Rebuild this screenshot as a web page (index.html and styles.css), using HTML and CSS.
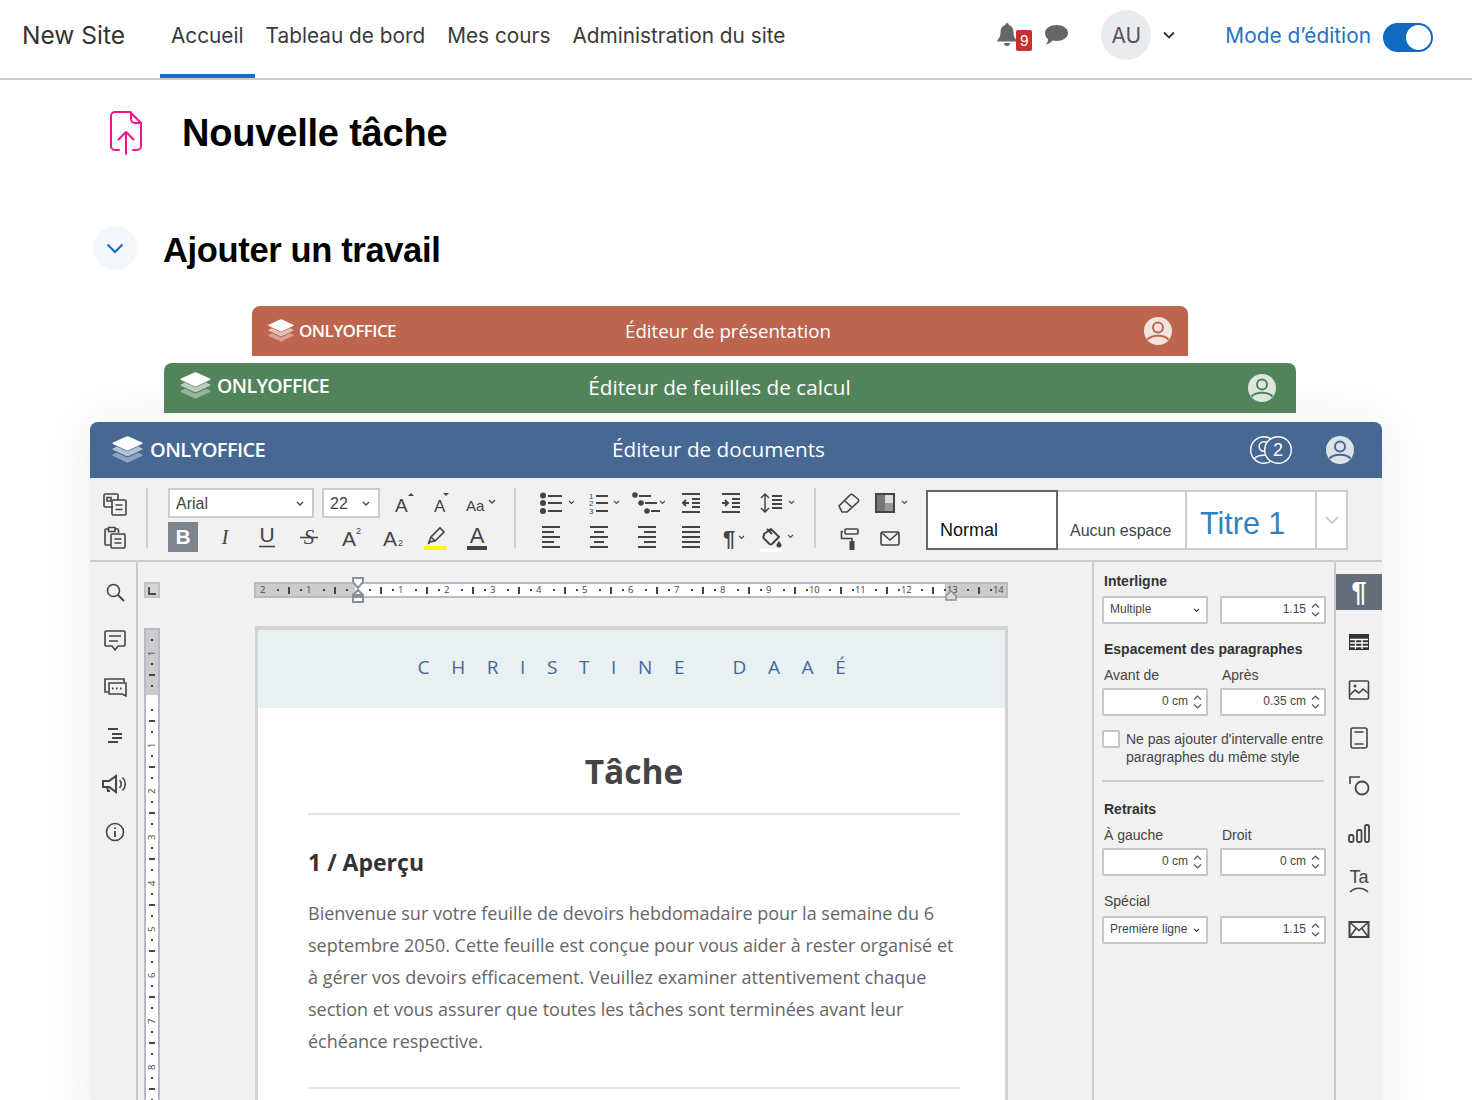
FILE: index.html
```html
<!DOCTYPE html>
<html lang="fr">
<head>
<meta charset="utf-8">
<title>Nouvelle tâche</title>
<link rel="stylesheet" href="styles.css">
</head>
<body>
<svg class="defs" width="0" height="0">
  <symbol id="logo" viewBox="0 0 31 28">
    <path fill="#fff" d="M14.4.4a2.6 2.6 0 0 1 2.2 0L30 6.6c.8.4.8 1 0 1.400L16.600 14.200a2.600 2.600 0 0 1-2.200 0L1 8c-.8-.4-.8-1 0-1.400z"/>
    <path fill="#fff" opacity=".6" d="M1 12.400l3.800-1.800 9.600 4.500a2.600 2.600 0 0 0 2.200 0l9.600-4.500 3.800 1.800c.8.4.8 1 0 1.400l-13.400 6.200a2.600 2.600 0 0 1-2.200 0L1 13.800c-.8-.4-.8-1 0-1.400z"/>
    <path fill="#fff" opacity=".4" d="M1 18.600l3.800-1.800 9.600 4.500a2.600 2.600 0 0 0 2.200 0l9.600-4.500 3.800 1.800c.8.400.8 1 0 1.400l-13.400 6.200a2.600 2.600 0 0 1-2.200 0L1 20c-.8-.4-.8-1 0-1.400z"/>
  </symbol>
  <symbol id="avatar" viewBox="0 0 28 28">
    <circle cx="14" cy="14" r="14" fill="var(--av-bg)"/>
    <circle cx="14" cy="10.500" r="5" fill="none" stroke="var(--av-fg)" stroke-width="2"/>
    <path d="M3.500 22.500C8 17.500 20 17.500 24.500 22.500" fill="none" stroke="var(--av-fg)" stroke-width="2"/>
  </symbol>
  <symbol id="chev" viewBox="0 0 8 6"><path d="M1 1l3 3 3-3" fill="none" stroke="#444" stroke-width="1.400"/></symbol>
  <symbol id="spin" viewBox="0 0 9 16"><path d="M1 5.500l3.500-3.500 3.500 3.500M1 10.500l3.500 3.500 3.500-3.500" fill="none" stroke="#555" stroke-width="1.200"/></symbol>
</svg>

<header class="topbar">
  <div class="brand">New Site</div>
  <nav class="nav">
    <a class="nav-link is-active">Accueil</a>
    <a class="nav-link">Tableau de bord</a>
    <a class="nav-link">Mes cours</a>
    <a class="nav-link">Administration du site</a>
  </nav>
  <div class="bell">
    <svg width="20" height="23" viewBox="0 0 20 23"><path fill="#666" d="M10 0a1.800 1.800 0 0 1 1.800 1.900C15 2.800 16.500 5.500 16.500 9c0 4 1 6 3 8v1.500H.5V17c2-2 3-4 3-8 0-3.500 1.500-6.200 4.700-7.100A1.800 1.800 0 0 1 10 0zM7 20h6a3 3 0 0 1-6 0z"/></svg>
    <span class="badge">9</span>
  </div>
  <svg class="chat" width="23" height="20" viewBox="0 0 23 20"><path fill="#666" d="M11.500 0C17.800 0 23 3.500 23 8s-5.200 8-11.500 8c-1.400 0-2.800-.2-4-.5C6 17 4 19 1 19.500c1.300-1.500 2-3.300 2.100-5.300C1.200 12.800 0 10.500 0 8c0-4.500 5.200-8 11.500-8z"/></svg>
  <div class="user">AU</div>
  <svg class="user-chev" width="12" height="8" viewBox="0 0 12 8"><path d="M1 1.500l5 5 5-5" fill="none" stroke="#333" stroke-width="1.800"/></svg>
  <span class="edit-label">Mode d’édition</span>
  <span class="toggle"><span class="knob"></span></span>
</header>

<main>
  <div class="title-row">
    <svg width="34" height="44" viewBox="0 0 34 44" fill="none" stroke="#f0148c" stroke-width="2" stroke-linecap="round" stroke-linejoin="round"><path d="M10 39H6a4 4 0 0 1-4-4V5a4 4 0 0 1 4-4h15l11 11v23a4 4 0 0 1-4 4h-4"/><path d="M22 1.500V8a4 4 0 0 0 4 4h6"/><path d="M17 43V21M9.500 28.500L17 21l7.500 7.500"/></svg>
    <h1>Nouvelle tâche</h1>
  </div>
  <div class="section-row">
    <span class="collapse"><svg width="18" height="11" viewBox="0 0 18 11"><path d="M1.500 1.500L9 9l7.500-7.500" fill="none" stroke="#1a6fc0" stroke-width="2.200"/></svg></span>
    <h2>Ajouter un travail</h2>
  </div>

  <section class="stack">
    <div class="bar bar-red">
      <svg class="logo" width="26" height="24"><use href="#logo"/></svg>
      <span class="wordmark">ONLYOFFICE</span>
      <span class="bar-title">Éditeur de présentation</span>
      <svg class="avatar" width="28" height="28"><use href="#avatar"/></svg>
    </div>
    <div class="bar bar-green">
      <svg class="logo" width="31" height="28"><use href="#logo"/></svg>
      <span class="wordmark">ONLYOFFICE</span>
      <span class="bar-title">Éditeur de feuilles de calcul</span>
      <svg class="avatar" width="28" height="28"><use href="#avatar"/></svg>
    </div>

    <div class="editor">
      <div class="bar bar-blue">
        <svg class="logo" width="31" height="28"><use href="#logo"/></svg>
        <span class="wordmark">ONLYOFFICE</span>
        <span class="bar-title">Éditeur de documents</span>
        <span class="coauth">
          <svg width="44" height="28" viewBox="0 0 44 28" fill="none" stroke="#fff" stroke-width="1.400"><circle cx="14" cy="14" r="13.300"/><circle cx="14" cy="10.500" r="4.800"/><path d="M4 23c4-5 16-5 20 0"/><circle cx="28" cy="14" r="13.300" fill="#476893"/><text x="28" y="20" class="coauth-n">2</text></svg>
        </span>
        <svg class="avatar" width="28" height="28"><use href="#avatar"/></svg>
      </div>

      <div class="toolbar">
        <div class="tgroup g-clip">
          <svg class="ti" width="30" height="30" viewBox="0 0 30 30"><path d="M13 19H5a1 1 0 0 1-1-1V7a1 1 0 0 1 1-1h12a1 1 0 0 1 1 1v5"/><path d="M7 9.500h4v3.500H7z"/><rect x="12" y="12" width="14" height="15" rx="1"/><path d="M15.500 17h7M15.500 21.500h7"/></svg>
          <svg class="ti" width="30" height="30" viewBox="0 0 30 30"><path d="M10 23H6a1 1 0 0 1-1-1V8a1 1 0 0 1 1-1h2.500M15 7h2.500a1 1 0 0 1 1 1v3"/><path d="M8.500 5.500h6.500v4H8.500z"/><rect x="11" y="12" width="14" height="14" rx="1"/><path d="M14.500 17h7M14.500 21h7"/></svg>
        </div>
        <span class="tsep s1"></span>
        <div class="tgroup g-font">
          <div class="trow">
            <span class="field f-name">Arial<svg width="8" height="6"><use href="#chev"/></svg></span>
            <span class="field f-size">22<svg width="8" height="6"><use href="#chev"/></svg></span>
            <svg class="ti tt" width="30" height="30" viewBox="0 0 30 30"><text x="7" y="24" class="glyph g19">A</text><path d="M20 8h6l-3-3z" fill="#444" stroke="none"/></svg>
            <svg class="ti tt" width="30" height="30" viewBox="0 0 30 30"><text x="8" y="24" class="glyph g17">A</text><path d="M17 5h6l-3 3z" fill="#444" stroke="none"/></svg>
            <svg class="ti tt" width="34" height="30" viewBox="0 0 34 30"><text x="2" y="23" class="glyph g15">Aa</text><use href="#chev" x="24" y="11" width="8" height="6"/></svg>
          </div>
          <div class="trow row-fmt">
            <span class="bold-btn">B</span>
            <svg class="ti" width="30" height="30" viewBox="0 0 30 30"><text x="15" y="22" class="glyph g20 ital">I</text></svg>
            <svg class="ti" width="30" height="30" viewBox="0 0 30 30"><text x="15" y="20" class="glyph g20 mid">U</text><path d="M7 24.500h16"/></svg>
            <svg class="ti" width="30" height="30" viewBox="0 0 30 30"><text x="15" y="22" class="glyph g20 mid ital">S</text><path d="M6 15.500h18"/></svg>
            <svg class="ti" width="30" height="30" viewBox="0 0 30 30"><text x="6" y="24" class="glyph g20">A</text><text x="20" y="12" class="glyph g9">2</text></svg>
            <svg class="ti" width="30" height="30" viewBox="0 0 30 30"><text x="5" y="24" class="glyph g20">A</text><text x="20" y="24" class="glyph g9">2</text></svg>
            <svg class="ti" width="30" height="30" viewBox="0 0 30 30"><path d="M9 20l2-5 9-9 4 4-9 9zM11 15l4 4M8 22l2-2"/><rect x="4" y="24" width="22" height="4" fill="#f8f800" stroke="none"/></svg>
            <svg class="ti" width="30" height="30" viewBox="0 0 30 30"><text x="15" y="21" class="glyph g21 mid">A</text><rect x="5" y="24" width="20" height="4" fill="#444" stroke="none"/></svg>
          </div>
        </div>
        <span class="tsep s2"></span>
        <div class="tgroup g-para">
          <svg class="ti" width="48" height="30" viewBox="0 0 48 30"><g fill="#444" stroke="none"><circle cx="15" cy="7.500" r="3"/><circle cx="15" cy="15" r="3"/><circle cx="15" cy="23" r="3"/></g><path d="M20 8h14M20 15h14M20 23h14"/><use href="#chev" x="40" y="12" width="7" height="5"/></svg>
          <svg class="ti" width="48" height="30" viewBox="0 0 48 30"><text x="13" y="11" class="glyph g8">1</text><text x="13" y="18" class="glyph g8">2</text><text x="13" y="26" class="glyph g8">3</text><path d="M20 8h12M20 15h12M20 23h12"/><use href="#chev" x="37" y="12" width="7" height="5"/></svg>
          <svg class="ti" width="48" height="30" viewBox="0 0 48 30"><g fill="#444" stroke="none"><circle cx="11" cy="7" r="2.800"/><circle cx="17" cy="15" r="2.800"/><circle cx="23" cy="23" r="2.800"/></g><path d="M15 8h12M21 15h12M27 23h9"/><use href="#chev" x="35" y="12" width="7" height="5"/></svg>
          <svg class="ti" width="40" height="30" viewBox="0 0 40 30"><path d="M10 6h18M20 11h8M20 15h8M20 19h8M10 24h18"/><path d="M17 15h-6M14 12l-3 3 3 3"/></svg>
          <svg class="ti" width="40" height="30" viewBox="0 0 40 30"><path d="M10 6h18M20 11h8M20 15h8M20 19h8M10 24h18"/><path d="M10 15h6M13 12l3 3-3 3"/></svg>
          <svg class="ti" width="50" height="30" viewBox="0 0 50 30"><path d="M13 6v18M9 10l4-4 4 4M9 20l4 4 4-4" stroke-width="1.500"/><path d="M20 8h10M20 12h10M20 16h10M20 20h10"/><use href="#chev" x="36" y="12" width="7" height="5"/></svg>
          <svg class="ti" width="48" height="30" viewBox="0 0 48 30"><path d="M14 5h18M14 10h12M14 15h18M14 20h12M14 25h18"/></svg>
          <svg class="ti" width="48" height="30" viewBox="0 0 48 30"><path d="M14 5h18M18 10h10M14 15h18M18 20h10M14 25h18"/></svg>
          <svg class="ti" width="48" height="30" viewBox="0 0 48 30"><path d="M14 5h18M20 10h12M14 15h18M20 20h12M14 25h18"/></svg>
          <svg class="ti" width="40" height="30" viewBox="0 0 40 30"><path d="M10 5h18M10 10h18M10 15h18M10 20h18M10 25h18"/></svg>
          <svg class="ti" width="40" height="30" viewBox="0 0 40 30"><text x="11" y="24" class="glyph g22 bld">¶</text><use href="#chev" x="26" y="13" width="7" height="5"/></svg>
          <svg class="ti" width="50" height="30" viewBox="0 0 50 30"><g transform="translate(-4 0)"><path d="M16 12l7-5 8 8-7 7a2 2 0 0 1-2.500 0l-5.500-5.500a2 2 0 0 1 0-3zM19 7l5 5"/><path d="M31 19c1.500 2 2.500 3 2.500 4a2.500 2.500 0 0 1-5 0c0-1 1-2 2.500-4z" fill="#444" stroke="none"/></g><rect x="8" y="27" width="22" height="3" fill="#fff" stroke="none"/><use href="#chev" x="35" y="12" width="7" height="5"/></svg>
        </div>
        <span class="tsep s3"></span>
        <div class="tgroup g-misc">
          <svg class="ti" width="36" height="30" viewBox="0 0 36 30"><path d="M9 18L20 7a2 2 0 0 1 3 0l5 4a2 2 0 0 1 0 3L17 24h-5zM14.500 12.500l7.500 7"/></svg>
          <svg class="ti" width="46" height="30" viewBox="0 0 46 30"><rect x="10" y="6" width="18" height="18" fill="#fff" stroke="#444" stroke-width="2"/><rect x="11" y="7" width="8" height="16" fill="#777" stroke="none"/><rect x="19" y="15" width="8" height="8" fill="#999" stroke="none"/><rect x="19" y="7" width="8" height="8" fill="#ddd" stroke="none"/><use href="#chev" x="35" y="12" width="7" height="5"/></svg>
          <svg class="ti" width="36" height="30" viewBox="0 0 36 30"><g transform="translate(3 0)"><path d="M13 7h11a1 1 0 0 1 1 1v3a1 1 0 0 1-1 1H13a1 1 0 0 1-1-1V8a1 1 0 0 1 1-1zM10 9.500H8.500v7H19v3"/><rect x="16.500" y="19" width="5" height="9" fill="#444" stroke="none"/></g></svg>
          <svg class="ti" width="46" height="30" viewBox="0 0 46 30"><rect x="15" y="10" width="18" height="13" rx="1.500"/><path d="M16 11l8 7 8-7"/></svg>
        </div>
        <div class="styles">
          <span class="style style-normal">Normal</span>
          <span class="style style-nospace">Aucun espace</span>
          <span class="style style-h1">Titre 1</span>
          <span class="style style-more"><svg width="14" height="8" viewBox="0 0 14 8"><path d="M1 1l6 6 6-6" fill="none" stroke="#bbb" stroke-width="1.500"/></svg></span>
        </div>
      </div>

      <div class="editor-body">
        <aside class="rail">
          <svg class="ti" width="28" height="28" viewBox="0 0 28 28"><circle cx="12.500" cy="12.500" r="6"/><path d="M17 17l6 6" stroke-width="2"/></svg>
          <svg class="ti" width="28" height="28" viewBox="0 0 28 28"><path d="M5 5h18a1 1 0 0 1 1 1v13a1 1 0 0 1-1 1h-6l-3 4-3-4H5a1 1 0 0 1-1-1V6a1 1 0 0 1 1-1zM8 10h12M8 15h9"/></svg>
          <svg class="ti" width="28" height="28" viewBox="0 0 28 28"><path d="M7 18H4V5h19v3"/><path d="M8 9h17v13l-4-2H8z"/><path d="M11 14.500h1.500M15 14.500h1.500M19 14.500h1.500" stroke-width="2"/></svg>
          <svg class="ti" width="28" height="28" viewBox="0 0 28 28"><path d="M7 7h10M11 12h10M11 16h10M7 20h10" stroke-width="1.800"/></svg>
          <svg class="ti" width="28" height="28" viewBox="0 0 28 28"><path d="M2 11h6l7-5v16l-7-5H2zM6 17l1 4h2" stroke-width="2"/><path d="M18.500 10a5.500 5.500 0 0 1 0 8M21.500 7.500a9 9 0 0 1 0 13"/></svg>
          <svg class="ti" width="28" height="28" viewBox="0 0 28 28"><circle cx="14" cy="14" r="8.500"/><path d="M14 13v6" stroke-width="1.800"/><path d="M14 9.500v1.600" stroke-width="1.800"/></svg>
        </aside>

        <div class="workspace">
          <span class="corner"><svg width="8" height="8" viewBox="0 0 8 8"><path d="M1 0v7h7" fill="none" stroke="#444" stroke-width="1.800"/></svg></span>
          <div class="hruler-wrap">
            <div class="hruler">
              <span class="hc">2</span><span class="hc">1</span><span class="hc"></span><span class="hc">1</span><span class="hc">2</span><span class="hc">3</span><span class="hc">4</span><span class="hc">5</span><span class="hc">6</span><span class="hc">7</span><span class="hc">8</span><span class="hc">9</span><span class="hc hc2">10</span><span class="hc hc2">11</span><span class="hc hc2">12</span><span class="hc hc2">13</span><span class="hc hc2">14</span>
            </div>
            <svg class="marker-l" width="12" height="26" viewBox="0 0 12 26"><path d="M1 1h10v4l-5 6-5-6zM1 18l5-5 5 5zM1 20h10v5H1z" fill="#fff" stroke="#8a9098" stroke-width="2"/></svg>
            <svg class="marker-r" width="12" height="11" viewBox="0 0 12 11"><path d="M6 1l5 5v4H1V6z" fill="#ddd" stroke="#8a9098" stroke-width="1.500"/></svg>
          </div>
          <div class="vruler">
            <div class="vcells">
              <span class="vc"><i></i></span><span class="vc"><i>1</i></span><span class="vc"><i></i></span><span class="vc"><i>1</i></span><span class="vc"><i>2</i></span><span class="vc"><i>3</i></span><span class="vc"><i>4</i></span><span class="vc"><i>5</i></span><span class="vc"><i>6</i></span><span class="vc"><i>7</i></span><span class="vc"><i>8</i></span>
            </div>
          </div>
          <article class="page">
            <div class="page-banner">CHRISTINE DAAÉ</div>
            <div class="page-content">
              <h3 class="doc-title">Tâche</h3>
              <hr class="doc-rule">
              <h4 class="doc-head">1 / Aperçu</h4>
              <p class="doc-text">Bienvenue sur votre feuille de devoirs hebdomadaire pour la semaine du 6 septembre 2050. Cette feuille est conçue pour vous aider à rester organisé et à gérer vos devoirs efficacement. Veuillez examiner attentivement chaque section et vous assurer que toutes les tâches sont terminées avant leur échéance respective.</p>
              <hr class="doc-rule doc-rule-b">
            </div>
          </article>
        </div>

        <aside class="panel">
          <div class="p-head">Interligne</div>
          <div class="p-grid mt7">
            <span class="pf pf-sel">Multiple<svg width="7" height="5"><use href="#chev"/></svg></span>
            <span class="pf pf-num">1.15<svg width="9" height="16"><use href="#spin"/></svg></span>
          </div>
          <div class="p-head mt17">Espacement des paragraphes</div>
          <div class="p-grid mt10 p-labels"><span>Avant de</span><span>Après</span></div>
          <div class="p-grid mt5">
            <span class="pf pf-num">0 cm<svg width="9" height="16"><use href="#spin"/></svg></span>
            <span class="pf pf-num">0.35 cm<svg width="9" height="16"><use href="#spin"/></svg></span>
          </div>
          <label class="p-check"><span class="box"></span><span>Ne pas ajouter d'intervalle entre paragraphes du même style</span></label>
          <hr class="p-rule">
          <div class="p-head mt19">Retraits</div>
          <div class="p-grid mt10 p-labels"><span>À gauche</span><span>Droit</span></div>
          <div class="p-grid mt5">
            <span class="pf pf-num">0 cm<svg width="9" height="16"><use href="#spin"/></svg></span>
            <span class="pf pf-num">0 cm<svg width="9" height="16"><use href="#spin"/></svg></span>
          </div>
          <div class="p-grid mt17 p-labels"><span>Spécial</span></div>
          <div class="p-grid mt7">
            <span class="pf pf-sel">Première ligne<svg width="7" height="5"><use href="#chev"/></svg></span>
            <span class="pf pf-num">1.15<svg width="9" height="16"><use href="#spin"/></svg></span>
          </div>
        </aside>

        <aside class="tabs">
          <span class="tab is-active">¶</span>
          <span class="tab"><svg width="24" height="20" viewBox="0 0 24 20"><rect x="2" y="2" width="20" height="16" fill="#333"/><path d="M3 7.500h18M3 11h18M3 14.500h18M8.500 7v10M15 7v10" stroke="#fff" stroke-width="1.300"/></svg></span>
          <span class="tab"><svg class="ti" width="24" height="24" viewBox="0 0 24 24"><rect x="2.500" y="3" width="19" height="18" rx="1"/><path d="M3 17l5-5 4 3 4-4 5 4"/><circle cx="8" cy="8" r="1.500" fill="#444" stroke="none"/></svg></span>
          <span class="tab"><svg class="ti" width="24" height="24" viewBox="0 0 24 24"><rect x="4" y="2" width="16" height="20" rx="2"/><path d="M7.500 6h9M7.500 18h9"/></svg></span>
          <span class="tab"><svg class="ti" width="24" height="24" viewBox="0 0 24 24"><path d="M3 10V3h10"/><circle cx="15" cy="14" r="6.500" stroke-width="1.800"/></svg></span>
          <span class="tab"><svg class="ti" width="24" height="24" viewBox="0 0 24 24"><rect x="2" y="13" width="4.500" height="7" rx="1.500" stroke-width="1.800"/><rect x="10" y="8" width="4.500" height="12" rx="1.500" stroke-width="1.800"/><rect x="18" y="3" width="4" height="17" rx="1.500" stroke-width="1.800"/></svg></span>
          <span class="tab"><svg class="ti tab-ta" width="24" height="28" viewBox="0 0 24 28"><text x="12" y="15" class="glyph g18 mid">Ta</text><path d="M3 24c5-5 13-5 18 0"/></svg></span>
          <span class="tab"><svg class="ti" width="24" height="22" viewBox="0 0 24 22"><rect x="2.500" y="3" width="19" height="15" fill="none" stroke-width="2"/><path d="M3 3.500l9 8 9-8M3 17.500l6-8M21 17.500l-6-8" stroke-width="1.600"/></svg></span>
        </aside>
      </div>
    </div>
  </section>
</main>
</body>
</html>
```

FILE: styles.css
```css
* { box-sizing: border-box; }
html, body { margin: 0; height: 1100px; overflow: hidden; background: #fff; }
body { font-family: "Inter", "Liberation Sans", sans-serif; color: #333; }
.defs { position: absolute; }

.topbar { display: flex; align-items: center; height: 80px; border-bottom: 2px solid #ccc; padding-left: 22px; }
.brand { font-size: 24.500px; color: #333; margin-right: 35px; margin-top: -8px; }
.nav { display: flex; align-self: stretch; }
.nav-link { display: flex; align-items: center; padding: 0 11px 8px; font-size: 20.800px; color: #3a3a3a; }
.nav-link.is-active { box-shadow: inset 0 -4px 0 #1a6fc0; }
.bell { position: relative; margin-left: auto; width: 35px; height: 28px; margin-top: -8px; padding-top: 2px; }
.badge { position: absolute; left: 19px; top: 9px; width: 16px; height: 21px; border-radius: 2px; background: #c9302c; color: #fff; font-size: 14px; line-height: 21px; text-align: center; }
.chat { margin-left: 13px; margin-top: -8px; }
.user { width: 50px; height: 50px; margin-left: 33px; border-radius: 50%; background: #e9ebef; color: #555; font-size: 21px; line-height: 52px; text-align: center; margin-top: -8px; }
.user-chev { margin-left: 12px; margin-top: -8px; }
.edit-label { margin-left: 50px; font-size: 20.850px; color: #1f74c6; margin-top: -8px; }
.toggle { display: flex; justify-content: flex-end; align-items: center; width: 50px; height: 29px; margin-left: 12px; margin-right: 39px; padding: 0 2px; border-radius: 15px; background: #1269c0; margin-top: -3px; }
.knob { width: 25px; height: 25px; border-radius: 50%; background: #fff; }

.title-row { display: flex; align-items: center; gap: 39px; padding: 30px 0 0 109px; height: 76px; }
h1 { margin: 0; font: 700 38px/46px "Liberation Sans", sans-serif; color: #000; letter-spacing: -.2px; }
.section-row { display: flex; align-items: center; gap: 26px; height: 44px; padding-left: 93px; margin-top: 70px; }
.collapse { display: flex; align-items: center; justify-content: center; width: 44px; height: 44px; border-radius: 50%; background: #f3f7fb; }
h2 { margin: 4px 0 0; font: 700 34.500px/44px "Liberation Sans", sans-serif; color: #000; letter-spacing: -.35px; }

.stack { margin-top: 36px; }
.bar { position: relative; display: flex; align-items: center; border-radius: 8px 8px 0 0; color: #fff; font-family: "Open Sans", sans-serif; }
.logo { flex: none; }
.wordmark { font-weight: 600; letter-spacing: -.6px; padding-bottom: 2px; }
.bar-title { position: absolute; left: 0; right: 0; padding-bottom: 2px; text-align: center; }
.avatar { margin-left: auto; position: relative; }
.bar-red { --av-bg: #f4e2de; --av-fg: #bd654e; width: 936px; height: 50px; margin-left: 252px; padding: 0 16px; background: #bd654e; }
.bar-red .wordmark { margin-left: 5px; font-size: 17px; }
.bar-red .bar-title { font-size: 18.700px; left: 16px; }
.bar-green { --av-bg: #dce7de; --av-fg: #52845b; width: 1132px; height: 50px; margin: 7px 0 0 164px; padding: 0 20px 0 16px; background: #52845b; }
.bar-green .wordmark { margin-left: 6px; font-size: 19.500px; margin-top: -4px; }
.bar-green .logo { margin-top: -4px; }
.bar-green .bar-title { font-size: 20.700px; left: -21px; }
.bar-blue { --av-bg: #dbe2ea; --av-fg: #476893; height: 56px; padding: 0 28px 0 22px; background: #476893; }
.bar-blue .wordmark { margin-left: 7px; font-size: 20px; }
.bar-blue .bar-title { font-size: 20.700px; left: -35px; }
.coauth { margin-left: auto; height: 28px; position: relative; margin-right: -16px; }
.coauth-n { fill: #fff; stroke: none; font: 400 18px "Liberation Sans", sans-serif; text-anchor: middle; }
.bar-blue .avatar { margin-left: 48px; }

.editor { margin: 9px 90px 0; height: 700px; background: #f1f1f1; border-radius: 8px 8px 0 0; box-shadow: 0 0 50px rgba(0, 0, 0, .08); }

.toolbar { display: flex; align-items: flex-start; height: 84px; padding: 10px 0 0 10px; border-bottom: 2px solid #ccc; background: #f1f1f1; }
.ti { fill: none; stroke: #444; stroke-width: 1.600; flex: none; }
.glyph { fill: #444; stroke: none; font-family: "Liberation Sans", sans-serif; }
.g8 { font-size: 8px; } .g9 { font-size: 9px; } .g15 { font-size: 15px; } .g17 { font-size: 17px; } .g18 { font-size: 18px; } .g19 { font-size: 19px; } .g20 { font-size: 21px; } .g21 { font-size: 22px; } .g22 { font-size: 22px; }
.mid { text-anchor: middle; }
.ital { font-family: "Liberation Serif", serif; font-style: italic; text-anchor: middle; }
.bld { font-weight: 700; }
.tgroup { flex: none; }
.tsep { flex: none; width: 2px; height: 60px; background: #d0d0d0; }
.g-clip { display: grid; grid-template-rows: 30px 30px; row-gap: 4px; width: 30px; }
.s1 { margin: 0 20px 0 16px; }
.g-font { width: 330px; display: flex; flex-direction: column; gap: 4px; }
.trow { display: flex; align-items: center; height: 30px; gap: 8px; }
.row-fmt { gap: 12px; }
.field { display: flex; align-items: center; justify-content: space-between; height: 30px; padding: 1px 8px 0 6px; background: #fff; border: 2px solid #ccc; font: 16px "Liberation Sans", sans-serif; color: #444; }
.f-name { width: 146px; }
.f-size { width: 58px; }
.bold-btn { width: 30px; height: 30px; background: #7d848d; color: #fff; text-align: center; font: 700 21px/30px "Liberation Sans", sans-serif; }
.s2 { margin: 0 12px 0 16px; }
.g-para { display: grid; grid-template-columns: 48px 48px 48px 40px 40px 50px; grid-auto-rows: 30px; row-gap: 4px; width: 274px; }
.g-para .ti { stroke-width: 2; }
.s3 { margin: 0 14px 0 12px; }
.g-misc { display: grid; grid-template-columns: 36px 46px; grid-auto-rows: 30px; row-gap: 4px; width: 82px; }
.styles { display: flex; width: 422px; height: 60px; margin: 2px 0 0 14px; border: 2px solid #ccc; background: #fff; font-family: "Liberation Sans", sans-serif; }
.style { display: flex; align-items: flex-end; height: 56px; border-right: 2px solid #ccc; }
.style-normal { width: 132px; height: 60px; margin: -2px 0 -2px -2px; padding: 0 0 7px 12px; border: 2px solid #666; background: #fff; font-size: 18px; color: #111; }
.style-nospace { width: 129px; padding: 0 0 8px 12px; font-size: 16px; color: #444; }
.style-h1 { width: 130px; padding: 0 0 5px 13px; font-size: 30.500px; line-height: 40px; color: #2e82c0; }
.style-more { flex: 1; align-items: center; justify-content: center; border-right: 0; }

.editor-body { display: grid; grid-template-columns: 48px 954px 244px 46px; height: 538px; }
.rail { display: flex; flex-direction: column; align-items: center; gap: 20px; padding: 16px 0 0 4px; border-right: 2px solid #ccc; }
.workspace { display: grid; grid-template-columns: 16px 754px; grid-template-rows: 16px 1fr; column-gap: 94px; row-gap: 28px; padding: 20px 0 0 6px; min-height: 0; overflow: hidden; }
.corner { display: flex; align-items: center; justify-content: center; background: #d6d6d6; border: 2px solid #c2c2c2; padding: 1px 0 0 0; }
.hruler-wrap { position: relative; }
.hruler { display: flex; height: 16px; overflow: hidden; border: 2px solid #b8bcc2; background: linear-gradient(to right, #ccc 99px, #fff 99px, #fff 689px, #ccc 689px); }
.hc {
  flex: none; width: 46px; height: 12px; padding-left: 4px; font: 9.500px/12px "Open Sans", "Liberation Sans", sans-serif; color: #444;
  background:
    linear-gradient(#444, #444) 21px 50% / 2px 2px no-repeat,
    linear-gradient(#444, #444) 32px 50% / 2px 7px no-repeat,
    linear-gradient(#444, #444) 44px 50% / 2px 2px no-repeat;
}
.hc2 { padding-left: 1px; letter-spacing: -.3px; }
.marker-l { position: absolute; left: 98px; top: -5px; }
.marker-r { position: absolute; left: 691px; top: 8px; }
.vruler { margin-top: 2px; overflow: hidden; border: 2px solid #b8bcc2; border-bottom: 0; background: linear-gradient(#ccc 65px, #fff 65px); }
.vcells { margin-top: -30px; }
.vc {
  display: flex; justify-content: center; align-items: flex-start; height: 46px;
  background:
    linear-gradient(#444, #444) 50% 17px / 2px 2px no-repeat,
    linear-gradient(#444, #444) 50% 28px / 6px 2px no-repeat,
    linear-gradient(#444, #444) 50% 39px / 2px 2px no-repeat;
}
.vc i { height: 14px; font: normal 9.500px/12px "Open Sans", "Liberation Sans", sans-serif; color: #444; writing-mode: vertical-rl; transform: rotate(180deg); text-align: center; }
.page { height: 600px; margin-left: 1px; border: 3px solid #d4d4d4; border-width: 4px 3px; background: #fff; font-family: "Open Sans", sans-serif; }
.page-banner { height: 78px; background: #e8f0f2; color: #44689a; font-size: 19px; line-height: 74px; letter-spacing: 21.600px; padding-left: 22px; text-align: center; }
.page-content { padding: 0 45px 0 50px; }
.doc-title { margin: 0; padding-top: 40px; font-size: 33.500px; line-height: 46px; font-weight: 700; color: #444; text-align: center; }
.doc-rule { height: 2px; margin: 19px 0 0; border: 0; background: #e2e2e2; }
.doc-head { margin: 31px 0 0; font-size: 23px; line-height: 32px; font-weight: 700; color: #333; }
.doc-text { margin: 19px 0 0; padding-right: 1px; font-size: 18px; line-height: 32px; color: #666; }
.doc-rule-b { margin-top: 30px; }

.panel { padding: 11px 8px 0; border: solid #ccc; border-width: 0 2px; font: 14px/16px "Liberation Sans", sans-serif; color: #444; }
.p-head { font-weight: 700; font-size: 14px; color: #333; padding-left: 2px; }
.p-grid { display: grid; grid-template-columns: 106px 106px; column-gap: 12px; }
.p-labels { padding-left: 2px; }
.mt5 { margin-top: 5px; } .mt7 { margin-top: 7px; } .mt10 { margin-top: 10px; } .mt17 { margin-top: 17px; } .mt19 { margin-top: 19px; }
.pf { display: flex; align-items: center; height: 28px; background: #fff; border: 2px solid #c6c6c6; border-radius: 2px; font-size: 12px; color: #444; padding-bottom: 2px; }
.pf svg { margin-top: 2px; }
.pf-sel { justify-content: space-between; padding-left: 6px; padding-right: 6px; }
.pf-num { justify-content: flex-end; gap: 5px; padding-right: 4px; }
.p-check { display: flex; gap: 6px; margin-top: 14px; line-height: 18px; }
.box { flex: none; width: 18px; height: 18px; background: #fff; border: 2px solid #c6c6c6; border-radius: 2px; }
.p-rule { height: 2px; margin: 14px 2px 0 0; border: 0; background: #d0d0d0; }

.tabs { display: flex; flex-direction: column; padding-top: 12px; align-items: stretch; background: #f1f1f1; }
.tab { display: flex; align-items: center; justify-content: center; height: 48px; }
.tab-ta { overflow: visible; }
.tab.is-active { height: 36px; margin-bottom: 8px; background: #666d7a; color: #fff; font: 700 27px/36px "Liberation Sans", sans-serif; }
```
